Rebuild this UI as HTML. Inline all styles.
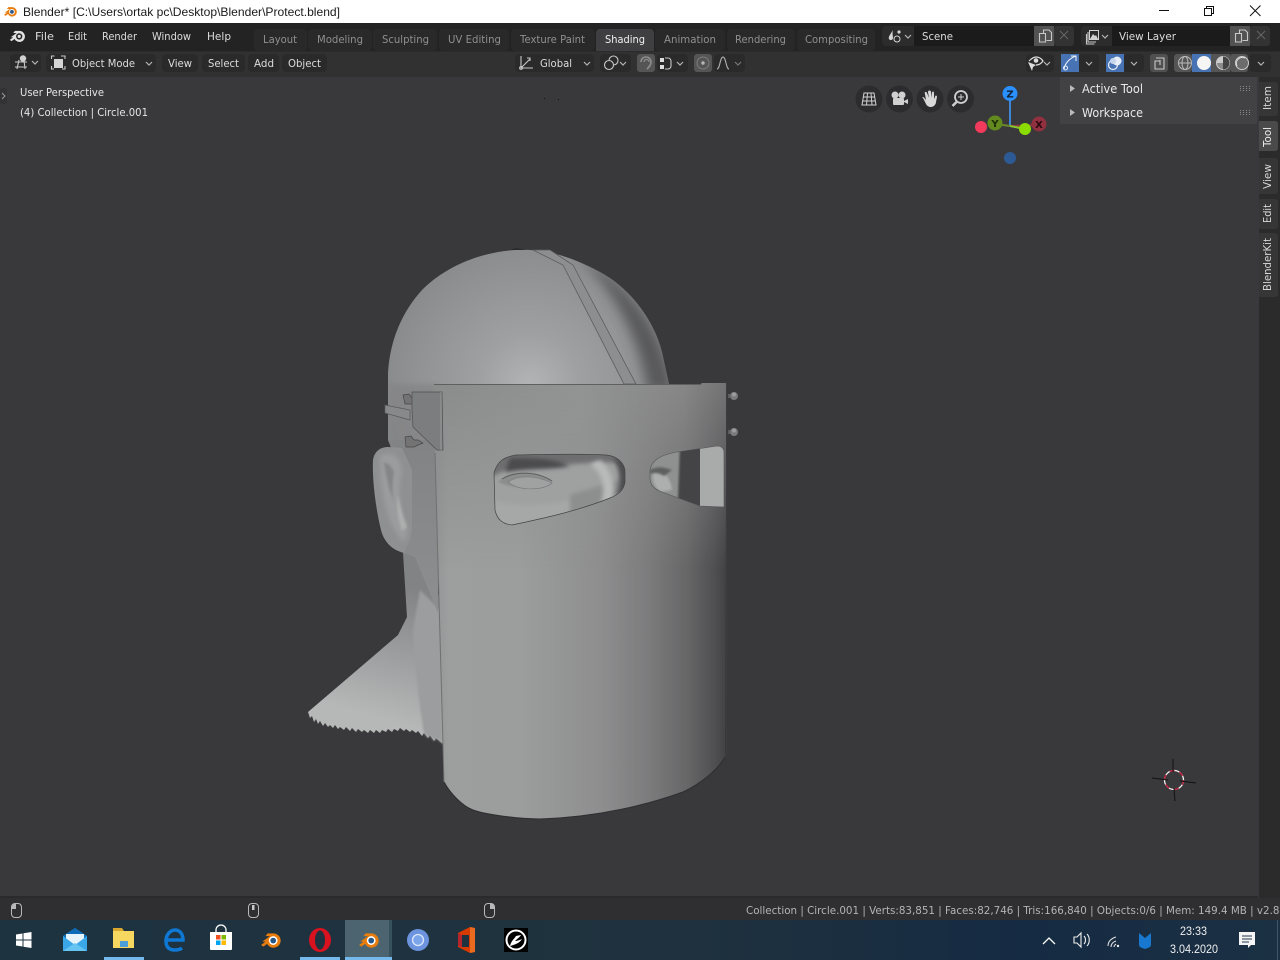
<!DOCTYPE html>
<html><head><meta charset="utf-8"><title>Blender</title>
<style>
html,body{margin:0;padding:0;width:1280px;height:960px;overflow:hidden;background:#39383b}
svg{display:block;position:absolute;left:0;top:0}
text{font-family:"DejaVu Sans","Liberation Sans",sans-serif;font-size:11px;fill:#d6d6d6}
.t{fill:#8f8f8f}
.m{fill:#dcdcdc}
.ic{fill:none;stroke:#c8c8c8;stroke-width:1.1}
.chev{fill:none;stroke:#b5b5b5;stroke-width:1.2}
</style></head><body>
<svg width="1280" height="960" viewBox="0 0 1280 960" xmlns="http://www.w3.org/2000/svg">
<defs>
<filter id="b1" x="-30%" y="-30%" width="160%" height="160%"><feGaussianBlur stdDeviation="1"/></filter>
<filter id="b2" x="-30%" y="-30%" width="160%" height="160%"><feGaussianBlur stdDeviation="2.200"/></filter>
<filter id="b6" x="-50%" y="-50%" width="200%" height="200%"><feGaussianBlur stdDeviation="6"/></filter>
<linearGradient id="shield" x1="0" x2="1" y1="0" y2="0">
<stop offset="0" stop-color="#939495"/><stop offset=".05" stop-color="#9d9e9e"/><stop offset=".29" stop-color="#9c9d9d"/><stop offset=".57" stop-color="#8e8e8f"/><stop offset=".74" stop-color="#7b7b7c"/><stop offset=".87" stop-color="#666667"/><stop offset=".96" stop-color="#504f51"/><stop offset="1" stop-color="#424143"/>
</linearGradient>
<linearGradient id="shieldTop" gradientUnits="userSpaceOnUse" x1="434" x2="727" y1="0" y2="0">
<stop offset="0" stop-color="#8a8b8b"/><stop offset=".5" stop-color="#929393"/><stop offset=".85" stop-color="#878788"/><stop offset="1" stop-color="#737374"/>
</linearGradient>
<linearGradient id="fadeV" gradientUnits="userSpaceOnUse" x1="0" x2="0" y1="384" y2="570">
<stop offset="0" stop-color="#fff"/><stop offset="1" stop-color="#000"/>
</linearGradient>
<mask id="fadeMask" maskUnits="userSpaceOnUse" x="430" y="380" width="300" height="200"><rect x="430" y="380" width="300" height="200" fill="url(#fadeV)"/></mask>
<radialGradient id="head" gradientUnits="userSpaceOnUse" cx="530" cy="385" r="170">
<stop offset="0" stop-color="#b3b4b5"/><stop offset=".3" stop-color="#9fa0a1"/><stop offset=".8" stop-color="#8c8d8e"/><stop offset="1" stop-color="#828384"/>
</radialGradient>
<linearGradient id="neck" gradientUnits="userSpaceOnUse" x1="420" y1="590" x2="385" y2="720">
<stop offset="0" stop-color="#828384"/><stop offset=".5" stop-color="#9c9d9e"/><stop offset="1" stop-color="#b6b7b7"/>
</linearGradient>
<linearGradient id="face" gradientUnits="userSpaceOnUse" x1="0" y1="440" x2="0" y2="620">
<stop offset="0" stop-color="#828384"/><stop offset="1" stop-color="#8e8f90"/>
</linearGradient>
<linearGradient id="task" x1="0" x2="1" y1="0" y2="0">
<stop offset="0" stop-color="#1d3340"/><stop offset=".55" stop-color="#1f313e"/><stop offset=".8" stop-color="#152b43"/><stop offset="1" stop-color="#1b3043"/>
</linearGradient>
<clipPath id="headClip"><path d="M388 415V373C390 340 402 312 422 290C448 264 484 252 515 250C545 248 572 257 600 272C630 288 654 320 662 352L669 384V470H400L388 440Z"/></clipPath>
<clipPath id="eyeClip"><path d="M494 473C497 462 503 457 516 455C560 454 590 454 606 455C618 456 625 464 625 472V482C624 490 618 495 610 498C580 510 550 517 512 525C502 524 497 519 495 510Z"/></clipPath>
<clipPath id="eyeRClip"><path d="M650 470C652 460 660 455 677 452L717 446C722 446 724 449 724 453L724 507L700 506L662 492C654 489 650 485 650 478Z"/></clipPath>
<g id="logo"><path d="M-8 1.500 L-1 -3.500 L-5 -3.500 L-3 -6 L2 -6 A6.500 6.500 0 1 1 -3.500 3.500 L-7 6 L-9 4.500 L-5 1.500Z" fill="#e87d0d"/><circle cx="2" cy="0.500" r="4" fill="#fff"/><circle cx="2" cy="0.500" r="2.600" fill="#265787"/></g>
</defs>

<rect width="1280" height="960" fill="#39383b"/>

<!-- title bar -->
<rect width="1280" height="23" fill="#fff"/>
<use href="#logo" transform="translate(10.500 11.500) scale(.72)"/>
<text x="23" y="16" style="fill:#1a1a1a;font-family:'Liberation Sans',sans-serif;font-size:12px" textLength="317" lengthAdjust="spacingAndGlyphs">Blender* [C:\Users\ortak pc\Desktop\Blender\Protect.blend]</text>
<path d="M1159 10.500h10" stroke="#111" stroke-width="1"/>
<path d="M1204.500 8.500h7v7h-7zM1206.500 8.500v-2h7v7h-2" fill="none" stroke="#111"/>
<path d="M1250 5.500l10.500 10.500M1260.500 5.500l-10.500 10.500" stroke="#111" stroke-width="1"/>

<!-- top bar -->
<rect y="23" width="1280" height="28" fill="#232323"/>
<g transform="translate(17.500 36) scale(.85)"><path d="M-8 1.500L-1 -3.500L-5 -3.500L-3 -6L2 -6A6.500 6.500 0 1 1 -3.500 3.500L-7 6L-9 4.500L-5 1.500Z" fill="#e2e2e2"/><circle cx="2" cy=".5" r="3.700" fill="#232323"/><circle cx="2" cy=".5" r="1.900" fill="#e2e2e2"/></g>
<text x="35" y="40" class="m" textLength="19" lengthAdjust="spacingAndGlyphs">File</text>
<text x="68" y="40" class="m" textLength="19" lengthAdjust="spacingAndGlyphs">Edit</text>
<text x="102" y="40" class="m" textLength="35" lengthAdjust="spacingAndGlyphs">Render</text>
<text x="152" y="40" class="m" textLength="39" lengthAdjust="spacingAndGlyphs">Window</text>
<text x="207" y="40" class="m" textLength="24" lengthAdjust="spacingAndGlyphs">Help</text>

<!-- workspace tabs -->
<g fill="#292929">
<rect x="254" y="29" width="53" height="22" rx="4"/><rect x="308" y="29" width="64" height="22" rx="4"/><rect x="373" y="29" width="64" height="22" rx="4"/><rect x="439" y="29" width="70" height="22" rx="4"/><rect x="511" y="29" width="84" height="22" rx="4"/><rect x="655" y="29" width="70" height="22" rx="4"/><rect x="727" y="29" width="68" height="22" rx="4"/><rect x="797" y="29" width="78" height="22" rx="4"/>
</g>
<path d="M596 51V33a4 4 0 0 1 4-4h50a4 4 0 0 1 4 4v18z" fill="#3f3f41"/>
<text x="263" y="43" class="t" textLength="34" lengthAdjust="spacingAndGlyphs">Layout</text>
<text x="317" y="43" class="t" textLength="46" lengthAdjust="spacingAndGlyphs">Modeling</text>
<text x="382" y="43" class="t" textLength="47" lengthAdjust="spacingAndGlyphs">Sculpting</text>
<text x="448" y="43" class="t" textLength="53" lengthAdjust="spacingAndGlyphs">UV Editing</text>
<text x="520" y="43" class="t" textLength="65" lengthAdjust="spacingAndGlyphs">Texture Paint</text>
<text x="605" y="43" style="fill:#f0f0f0" textLength="40" lengthAdjust="spacingAndGlyphs">Shading</text>
<text x="664" y="43" class="t" textLength="52" lengthAdjust="spacingAndGlyphs">Animation</text>
<text x="735" y="43" class="t" textLength="51" lengthAdjust="spacingAndGlyphs">Rendering</text>
<text x="805" y="43" class="t" textLength="63" lengthAdjust="spacingAndGlyphs">Compositing</text>

<!-- scene selector -->
<rect x="882" y="26" width="34" height="20" rx="4" fill="#2c2c2c"/>
<rect x="914" y="26" width="121" height="20" fill="#1b1b1b"/>
<rect x="1034" y="26" width="20" height="20" fill="#525252"/>
<rect x="1054" y="26" width="20" height="20" rx="3" fill="#333"/>
<text x="922" y="40" class="m" textLength="31" lengthAdjust="spacingAndGlyphs">Scene</text>
<path d="M893 30c-3 5-5 7-4 9s4 1 4-1-1-5 0-8z" fill="#d4d4d4"/><circle cx="899" cy="32" r="1.600" fill="#d4d4d4"/><circle cx="897" cy="39" r="3" fill="none" stroke="#d4d4d4"/>
<path class="chev" d="M905 35l3 3 3-3"/>
<path class="ic" d="M1039.500 33.500h4v-3.500h5.500l2.500 2.500v8h-5M1039.500 33.500h6v8.500h-6z"/>
<path d="M1060 31l8 8m0-8l-8 8" stroke="#666" stroke-width="1"/>

<rect x="1081" y="26" width="34" height="20" rx="4" fill="#2c2c2c"/>
<rect x="1112" y="26" width="118" height="20" fill="#1b1b1b"/>
<rect x="1230" y="26" width="20" height="20" fill="#525252"/>
<rect x="1250" y="26" width="20" height="20" rx="3" fill="#333"/>
<text x="1119" y="40" class="m" textLength="57" lengthAdjust="spacingAndGlyphs">View Layer</text>
<path class="ic" d="M1088 32v10h8M1086.500 34v10h8"/><rect x="1089.500" y="30.500" width="9" height="9" fill="none" stroke="#d0d0d0"/><path d="M1090 39l3-5 2 2 1-1 2 4z" fill="#d0d0d0"/>
<path class="chev" d="M1102 35l3 3 3-3"/>
<path class="ic" d="M1235.500 33.500h4v-3.500h5.500l2.500 2.500v8h-5M1235.500 33.500h6v8.500h-6z"/>
<path d="M1257 31l8 8m0-8l-8 8" stroke="#666" stroke-width="1"/>

<!-- 3D viewport header -->
<rect y="51" width="1280" height="26" fill="#313132"/>
<rect y="51" width="1280" height="1" fill="#2b2b2b"/>
<g fill="#2a2a2b">
<rect x="10" y="54" width="31" height="18" rx="4"/>
<rect x="46" y="54" width="110" height="18" rx="4"/>
<rect x="162" y="54" width="36" height="18" rx="4"/>
<rect x="202" y="54" width="43" height="18" rx="4"/>
<rect x="248" y="54" width="31" height="18" rx="4"/>
<rect x="282" y="54" width="45" height="18" rx="4"/>
<rect x="515" y="54" width="79" height="18" rx="4"/>
<rect x="600" y="54" width="31" height="18" rx="4"/>
<rect x="657" y="54" width="31" height="18" rx="4"/>
<rect x="714" y="54" width="31" height="18" rx="4"/>
<rect x="1026" y="54" width="28" height="18" rx="4"/>
<rect x="1079" y="54" width="20" height="18" rx="3"/>
<rect x="1124" y="54" width="20" height="18" rx="3"/>
<rect x="1250" y="54" width="21" height="18" rx="3"/>
</g>
<path class="ic" d="M15 62h12M15 67h12M19 60l-2 9M24 60l1 9"/><circle cx="23" cy="58.500" r="3.200" fill="#d0d0d0"/>
<path class="chev" d="M32 61l3 3 3-3"/>
<rect x="54" y="59" width="9" height="9" fill="#d5d5d5"/><path class="ic" d="M51.500 59v-3h3M61 56h4v3M65 66v3h-3M54 69h-2.500v-3"/>
<text x="72" y="67" class="m" textLength="63" lengthAdjust="spacingAndGlyphs">Object Mode</text>
<path class="chev" d="M146 62l3 3 3-3"/>
<text x="168" y="67" class="m" textLength="24" lengthAdjust="spacingAndGlyphs">View</text>
<text x="208" y="67" class="m" textLength="31" lengthAdjust="spacingAndGlyphs">Select</text>
<text x="254" y="67" class="m" textLength="20" lengthAdjust="spacingAndGlyphs">Add</text>
<text x="288" y="67" class="m" textLength="33" lengthAdjust="spacingAndGlyphs">Object</text>

<path class="ic" d="M521 56v12h12M521 68l9-9M527 58h3v3"/><circle cx="521" cy="68" r="1.400" fill="none" stroke="#c8c8c8"/>
<text x="540" y="67" class="m" textLength="32" lengthAdjust="spacingAndGlyphs">Global</text>
<path class="chev" d="M584 62l3 3 3-3"/>
<circle cx="609" cy="65" r="4.500" fill="none" stroke="#c8c8c8" stroke-width="1.100"/><path d="M609 60.500a4.500 4.500 0 1 1 4.500 4.500" fill="none" stroke="#c8c8c8" stroke-width="1.100"/>
<path class="chev" d="M620 62l3 3 3-3"/>
<rect x="637" y="54" width="18" height="18" rx="3" fill="#555"/>
<path d="M641 62a5 5 0 0 1 10 0c0 3-2 5-4 7" fill="none" stroke="#8e8e8e" stroke-width="1.600"/>
<path d="M644 62a2.500 2.500 0 0 1 5 0" fill="none" stroke="#8e8e8e" stroke-width="1.200"/>
<rect x="660" y="58" width="4" height="4" fill="#ddd"/><rect x="660" y="65" width="4" height="4" fill="#ddd"/>
<path class="ic" d="M665 58h3a3 3 0 0 1 3 3v5a3 3 0 0 1-3 3h-3"/>
<path class="chev" d="M677 62l3 3 3-3"/>
<rect x="694" y="54" width="18" height="18" rx="3" fill="#555"/>
<circle cx="703" cy="63" r="6" fill="none" stroke="#7c7c7c"/><circle cx="703" cy="63" r="1.700" fill="#b5b5b5"/>
<path d="M717 69c3 0 3-12 6-12s3 12 6 12" fill="none" stroke="#b0b0b0" stroke-width="1.100"/>
<path d="M735 62l3 3 3-3" fill="none" stroke="#777" stroke-width="1.200"/>

<path d="M1029 61c3-3 5-4 7-4s5 1 7 4c-2 3-5 4-7 4" fill="none" stroke="#ddd" stroke-width="1.200"/>
<circle cx="1036" cy="60.500" r="2.300" fill="#ddd"/><path d="M1028 62l8 3-3 2-1 4z" fill="#ddd"/>
<path class="chev" d="M1044 62l3 3 3-3"/>
<rect x="1061" y="54" width="18" height="18" fill="#4772b3"/>
<path d="M1064 69c1-6 6-11 12-13M1071 56h5v5" fill="none" stroke="#e8eef8" stroke-width="1.100"/><circle cx="1065.500" cy="68" r="2" fill="none" stroke="#e8eef8"/>
<path class="chev" d="M1086 62l3 3 3-3"/>
<rect x="1106" y="54" width="18" height="18" fill="#4772b3"/>
<circle cx="1113" cy="65" r="4.500" fill="none" stroke="#e8eef8" stroke-width="1.200"/><circle cx="1117" cy="61" r="4.500" fill="#e8eef8"/><circle cx="1113" cy="61" r="3" fill="#c8d6ec"/>
<path class="chev" d="M1131 62l3 3 3-3"/>
<rect x="1150" y="54" width="18" height="18" rx="3" fill="#505050"/>
<path class="ic" d="M1156 58h8v11h-9v-8h5v-1M1155 61h5v4"/>
<rect x="1174" y="54" width="18" height="18" rx="3" fill="#555"/>
<rect x="1192" y="54" width="19" height="18" fill="#4772b3"/>
<rect x="1211" y="54" width="19" height="18" fill="#555"/>
<rect x="1230" y="54" width="18" height="18" rx="3" fill="#555"/>
<circle cx="1185" cy="63" r="6.500" fill="none" stroke="#bbb"/><ellipse cx="1185" cy="63" rx="3" ry="6.500" fill="none" stroke="#bbb"/><path d="M1178.500 63h13" stroke="#bbb"/>
<circle cx="1204" cy="63" r="7" fill="#f5f5f5"/>
<circle cx="1223" cy="63" r="6.500" fill="#8a8a8a" stroke="#ccc"/><path d="M1223 56.500a6.500 6.500 0 0 1 0 13z" fill="#444"/><path d="M1223 56.500a6.500 6.500 0 0 0-6.500 6.500h6.500z" fill="#ccc"/>
<circle cx="1242" cy="63" r="6.500" fill="#6c6c6c" stroke="#ccc"/><path d="M1237 66a6 6 0 0 1 8-8" fill="none" stroke="#ddd"/>
<path class="chev" d="M1258 62l3 3 3-3"/>

<!-- overlay text -->
<text x="20" y="96" style="fill:#e6e6e6" textLength="84" lengthAdjust="spacingAndGlyphs">User Perspective</text>
<text x="20" y="116" style="fill:#e6e6e6" textLength="128" lengthAdjust="spacingAndGlyphs">(4) Collection | Circle.001</text>
<rect x="0" y="88" width="7" height="16" rx="2" fill="#2d2d2f" opacity=".5"/>
<path d="M2 93l3 3-3 3" fill="none" stroke="#9a9a9a"/>
<rect x="544" y="98" width="1" height="1" fill="#111"/><rect x="558" y="99" width="1" height="1" fill="#111"/>

<!-- nav gizmo buttons -->
<g fill="#2c2b2e"><circle cx="869" cy="99" r="13.500"/><circle cx="899.500" cy="99" r="13.500"/><circle cx="930" cy="99" r="13.500"/><circle cx="960.500" cy="99" r="13.500"/></g>
<path d="M864 93h10l2 12h-14zM862.500 101h13M863.500 97h11M867.500 93l-1 12M871 93l1 12" fill="none" stroke="#d0d0d0" stroke-width="1"/>
<circle cx="895" cy="95" r="3.500" fill="#d0d0d0"/><circle cx="902" cy="95" r="3.500" fill="#d0d0d0"/><rect x="893" y="98" width="11" height="7" rx="1" fill="#d0d0d0"/><path d="M904 101l4-2v5l-4-2z" fill="#d0d0d0"/>
<path d="M923 98l3 6c1 2 3 3 5 3s5-2 5-5l1-5c0-2-2-2-2 0l-1 2v-6c0-2-2-2-2 0v5l-1-6c0-2-3-2-3 0l1 6-2-5c-1-2-3-1-2 1l1 6c-1-1-2-3-3-3s-1 0 0 1z" fill="#d8d8d8"/>
<circle cx="961" cy="97" r="6" fill="none" stroke="#d0d0d0" stroke-width="1.800"/><path d="M956.500 102l-4 4" stroke="#d0d0d0" stroke-width="2.500"/><path d="M961 94v6M958 97h6" stroke="#d0d0d0"/>

<!-- axis gizmo -->
<path d="M1010 94V126" stroke="#3f86d4" stroke-width="2"/>
<path d="M1010 126L995 124" stroke="#6a8c2a" stroke-width="2"/>
<path d="M1010 126L1039 125" stroke="#8c3a45" stroke-width="2"/>
<path d="M1010 126L1025 129" stroke="#88c82a" stroke-width="2"/>
<circle cx="1010" cy="158" r="6" fill="#2d5a94"/>
<circle cx="981" cy="127" r="6" fill="#f23a5c"/>
<circle cx="995" cy="123" r="7.500" fill="#628a1e"/>
<circle cx="1039" cy="124" r="7.500" fill="#91303f"/>
<circle cx="1025" cy="129" r="6" fill="#8bdc00"/>
<circle cx="1010" cy="93.500" r="7.500" fill="#2a8fff"/>
<text x="1010" y="97.500" text-anchor="middle" style="fill:#123;font-size:10px;font-weight:bold">Z</text>
<text x="995" y="127" text-anchor="middle" style="fill:#1e2c08;font-size:10px;font-weight:bold">Y</text>
<text x="1039" y="128" text-anchor="middle" style="fill:#2a0a10;font-size:10px;font-weight:bold">X</text>

<!-- N panel -->
<rect x="1060" y="77" width="197" height="47" fill="#424244"/>
<path d="M1070 85l5 3.500-5 3.500zM1070 109l5 3.500-5 3.500z" fill="#b9b9b9"/>
<text x="1082" y="93" style="fill:#e8e8e8;font-size:12px" textLength="61" lengthAdjust="spacingAndGlyphs">Active Tool</text>
<text x="1082" y="117" style="fill:#e8e8e8;font-size:12px" textLength="61" lengthAdjust="spacingAndGlyphs">Workspace</text>
<g stroke="#8a8a8a" stroke-dasharray="1 2" stroke-width="1"><path d="M1240 86.500h11M1240 88.500h11M1240 90.500h11M1240 110.500h11M1240 112.500h11M1240 114.500h11"/></g>

<!-- side tabs -->
<rect x="1259" y="77" width="21" height="821" fill="#2b2b2c"/>
<g fill="#363637">
<path d="M1259 82h16a3 3 0 0 1 3 3v28a3 3 0 0 1-3 3h-16z"/>
<path d="M1259 158h16a3 3 0 0 1 3 3v30a3 3 0 0 1-3 3h-16z"/>
<path d="M1259 199h16a3 3 0 0 1 3 3v24a3 3 0 0 1-3 3h-16z"/>
<path d="M1259 233h16a3 3 0 0 1 3 3v58a3 3 0 0 1-3 3h-16z"/>
</g>
<path d="M1259 121h16a3 3 0 0 1 3 3v24a3 3 0 0 1-3 3h-16z" fill="#4a4a4b"/>
<g>
<text transform="translate(1271 110) rotate(-90)" textLength="24" lengthAdjust="spacingAndGlyphs">Item</text>
<text transform="translate(1271 147) rotate(-90)" style="fill:#f0f0f0" textLength="20" lengthAdjust="spacingAndGlyphs">Tool</text>
<text transform="translate(1271 189) rotate(-90)" textLength="25" lengthAdjust="spacingAndGlyphs">View</text>
<text transform="translate(1271 223) rotate(-90)" textLength="19" lengthAdjust="spacingAndGlyphs">Edit</text>
<text transform="translate(1271 291) rotate(-90)" textLength="53" lengthAdjust="spacingAndGlyphs">BlenderKit</text>
</g>

<!-- neck -->
<path d="M403 553L407 617L398 635L308 712L310 718L312 716L314 722L316 719L318 724L320 721L323 726L325 723L328 727L330 725L333 728L335 725L338 729L340 727L344 730L346 727L350 731L352 728L356 732L358 729L362 732L364 730L368 733L370 730L374 733L376 730L380 733L382 730L386 732L388 729L392 732L394 729L398 731L400 728L404 731L406 729L410 732L412 730L416 733L418 731L422 736L424 733L428 738L430 735L434 741L436 738L443 744L440 600L420 540Z" fill="url(#neck)"/>
<path d="M413 630C415 670 420 710 424 733L428 738L430 735L434 741L436 738L443 744L440 610L420 590Z" fill="#9c9d9e" filter="url(#b1)"/>

<!-- head -->
<g clip-path="url(#headClip)">
<rect x="380" y="240" width="300" height="240" fill="url(#head)"/>
<path d="M578 255C640 290 665 340 674 392L648 392C640 340 615 290 578 255Z" fill="#4c4b4d" opacity=".8" filter="url(#b6)"/>
<path d="M388 384h50v90h-50z" fill="#838485" opacity=".7" filter="url(#b2)"/>
</g>
<!-- strap -->
<path d="M533 250L550 250L573 265L636 384H624L563 265Z" fill="#8d8e8f" stroke="#5c5c5d" stroke-width=".8"/>
<path d="M510 250l6-2 10 2z" fill="#2b2b2d"/>

<!-- side of face -->
<path d="M390 440H438V613L415 557L404 553L396 500Z" fill="url(#face)"/>
<!-- ear -->
<path d="M373 460C374 452 380 447 388 447L402 448L412 470L412 530L410 540L404 553C392 550 384 542 381 530C376 510 372 480 373 460Z" fill="#8f9091"/>
<path d="M380 456C390 450 400 456 402 470C398 490 398 510 408 530L404 542C390 530 382 500 380 470Z" fill="#9b9c9d" filter="url(#b2)"/>
<path d="M398 495c2 10 5 22 9 32l-5 4c-4-12-6-24-4-36z" fill="#adaeae" filter="url(#b1)"/>
<path d="M384 462c5 2 8 5 10 10-2 12-2 22 0 30-5-12-8-26-10-40z" fill="#858687" filter="url(#b1)"/>

<!-- band + pegs -->
<path d="M385 405L410 410L410 420L385 413Z" fill="#88898a" stroke="#58585a" stroke-width=".7"/>
<path d="M403 395L409 394L412 398L416 397L422 400L416 402L412 404L405 404Z" fill="#737374" stroke="#47474a" stroke-width=".7"/>
<path d="M405 437L411 436L414 440L418 440L423 443L418 445L414 447L406 447Z" fill="#737374" stroke="#47474a" stroke-width=".7"/>

<!-- shield -->
<path id="sh" d="M434 384L701 384L702 383L726 383L725 757C718 770 700 784 683 792C650 804 600 817 540 819C520 819 487 815 473 810C462 806 450 793 444 782C441 680 438 560 435 453Z" fill="url(#shield)"/>
<path d="M434 384L701 384L702 383L726 383L726 580H436Z" fill="url(#shieldTop)" mask="url(#fadeMask)"/>
<path d="M434 384.500L701 384.500" stroke="#5f5f60" stroke-width="1"/>
<path d="M435 453C438 560 441 680 444 782" stroke="#707071" stroke-width="1" fill="none"/>
<path d="M444 782C450 793 462 806 473 810C487 815 520 819 540 819C600 817 650 804 683 792C700 784 718 770 725 757" stroke="#2f2e31" stroke-width="1.100" fill="none"/>
<path d="M726.500 384V757" stroke="#3d3c3f" stroke-width="1"/>

<!-- bracket -->
<path d="M412 392L442 392L443 450L437 450L413 427L412 410Z" fill="#7c7d7e" stroke="#4f4f50" stroke-width=".7"/>
<path d="M441 392V450" stroke="#98999a" stroke-width="1"/>

<!-- left eye hole -->
<g clip-path="url(#eyeClip)">
<rect x="490" y="450" width="140" height="80" fill="#9fa0a0"/>
<path d="M490 500C530 510 570 505 630 480V530H490Z" fill="#a6a7a7" filter="url(#b2)"/>
<path d="M570 495L626 478V505L570 520Z" fill="#8d8e8e" filter="url(#b2)"/>
<path d="M490 450H630V462C600 462 570 464 545 466C525 466 505 468 490 478Z" fill="#6e6e6f" filter="url(#b2)"/>
<path d="M510 458C530 458 555 458 570 466C550 470 525 468 505 472Z" fill="#4c4c4d" filter="url(#b2)"/>
<path d="M498 482C510 470 535 470 552 482C540 488 515 490 498 482Z" fill="#8b8c8c" filter="url(#b1)"/>
<path d="M508 482C518 475 536 475 552 483C545 490 520 492 508 482Z" fill="#a0a1a1" stroke="#77777a" stroke-width=".6"/>
<path d="M502 479C515 471 536 471 552 481" fill="none" stroke="#5d5d5e" stroke-width="1"/>
<path d="M590 464C604 474 606 490 600 506L612 500C616 488 612 470 600 460Z" fill="#b9baba" filter="url(#b2)"/>
<path d="M612 458C620 466 622 484 616 496L630 490V460Z" fill="#4e4e4f" filter="url(#b2)"/>
</g>
<path d="M494 473C497 462 503 457 516 455C560 454 590 454 606 455C618 456 625 464 625 472V482C624 490 618 495 610 498C580 510 550 517 512 525C502 524 497 519 495 510Z" fill="none" stroke="#444446" stroke-width=".7"/>

<!-- right eye hole -->
<g clip-path="url(#eyeRClip)">
<rect x="645" y="440" width="85" height="75" fill="#444345"/>
<path d="M645 445H680L678 500H645Z" fill="#8f9090" filter="url(#b1)"/>
<path d="M655 468C663 470 671 478 672 490L660 492C654 486 650 478 655 468Z" fill="#adaeae" filter="url(#b1)"/>
<path d="M650 470C656 466 664 467 672 470L664 476C660 473 654 472 650 474Z" fill="#5e5e5f" filter="url(#b1)"/>
<path d="M700 444H726V510H700Z" fill="#a9aaaa"/>
</g>
<path d="M650 470C652 460 660 455 677 452L717 446C722 446 724 449 724 453L724 507L700 506L662 492C654 489 650 485 650 478Z" fill="none" stroke="#555557" stroke-width=".6"/>

<!-- rivets -->
<circle cx="734" cy="396" r="4" fill="#7b7b7c"/><path d="M730 394h-2v4h2z" fill="#5d5d5e"/><circle cx="734" cy="394.500" r="2" fill="#9c9c9d"/>
<circle cx="734" cy="432" r="4" fill="#7b7b7c"/><path d="M730 430h-2v4h2z" fill="#5d5d5e"/><circle cx="734" cy="430.500" r="2" fill="#9c9c9d"/>

<!-- 3D cursor -->
<circle cx="1174" cy="780" r="9.500" fill="none" stroke="#f0f0f0" stroke-width="1.300"/>
<circle cx="1174" cy="780" r="9.500" fill="none" stroke="#c0213f" stroke-width="1.400" stroke-dasharray="5 5"/>
<path d="M1152 778L1168 780M1180 781L1196 783M1173 759V772M1174 788L1175 801" stroke="#111" stroke-width="1"/>

<!-- status bar -->
<rect y="896" width="1258" height="2" fill="#2a2a2b"/>
<rect y="898" width="1280" height="22" fill="#2f2e30"/>
<g fill="none" stroke="#b8b8b8" stroke-width="1">
<rect x="11.500" y="903.500" width="10" height="14" rx="3.500"/>
<rect x="248.500" y="903.500" width="10" height="14" rx="3.500"/>
<rect x="484.500" y="903.500" width="10" height="14" rx="3.500"/>
</g>
<path d="M12 907v-1a3 3 0 0 1 4-2v5h-4z" fill="#b8b8b8"/>
<rect x="252" y="905" width="2.500" height="5" fill="#c8c8c8"/>
<path d="M490 904a3 3 0 0 1 4 2v3h-4z" fill="#b8b8b8"/>
<text x="746" y="914" style="fill:#b4b4b4" textLength="540" lengthAdjust="spacingAndGlyphs">Collection | Circle.001 | Verts:83,851 | Faces:82,746 | Tris:166,840 | Objects:0/6 | Mem: 149.4 MB | v2.80</text>

<!-- taskbar -->
<rect y="920" width="1280" height="40" fill="url(#task)"/>
<path d="M16 934.500l6.500-1v6h-6.500zM23.500 933.300l8-1.300v7.500h-8zM16 940.500h6.500v6l-6.500-1zM23.500 940.500h8v7.500l-8-1.300z" fill="#fff"/>
<!-- mail -->
<path d="M63 936l12-8 12 8v15H63z" fill="#1f8fdc"/><path d="M63 936l12 9 12-9-12-8z" fill="#0f6cb8"/><path d="M66 934h18v8l-9 5-9-5z" fill="#e8f4fb"/><path d="M63 936l12 9 12-9v15H63z" fill="#3aa8e8"/><path d="M63 951l12-8 12 8z" fill="#66c4f2"/>
<!-- explorer -->
<rect x="113" y="931" width="21" height="17" fill="#f6d860"/><path d="M113 931v-3h9l2 3z" fill="#d9a62e"/><rect x="120" y="941" width="8" height="6" fill="#4c9ed9"/><rect x="104" y="957" width="40" height="3" fill="#76b9ed"/>
<!-- edge -->
<path d="M166 940h17c0-7-4-10-8-10s-9 4-9 11 4 9 9 9c3 0 5-.5 7-2" fill="none" stroke="#0f78d4" stroke-width="3.500"/>
<!-- store -->
<path d="M210 932h22v17a1 1 0 0 1-1 1h-20a1 1 0 0 1-1-1z" fill="#fff"/><path d="M216 932v-2a5 5 0 0 1 10 0v2" fill="none" stroke="#fff" stroke-width="1.300"/>
<rect x="216" y="935" width="4.500" height="4.500" fill="#f25022"/><rect x="221.500" y="935" width="4.500" height="4.500" fill="#7fba00"/><rect x="216" y="940.500" width="4.500" height="4.500" fill="#00a4ef"/><rect x="221.500" y="940.500" width="4.500" height="4.500" fill="#ffb900"/>
<!-- blender -->
<use href="#logo" transform="translate(271 940) scale(1.100)"/>
<!-- opera -->
<ellipse cx="320" cy="940" rx="11" ry="12" fill="#d9121f"/><ellipse cx="320" cy="940" rx="5" ry="9.500" fill="#1e323f"/><rect x="300" y="957" width="40" height="3" fill="#76b9ed"/>
<!-- active blender -->
<rect x="345" y="920" width="47" height="40" fill="#4b6470"/><rect x="389" y="920" width="3" height="40" fill="#36505c"/>
<use href="#logo" transform="translate(369 940) scale(1.100)"/><rect x="345" y="957" width="47" height="3" fill="#76b9ed"/>
<!-- chromium -->
<circle cx="418" cy="940" r="11" fill="#6c94de"/><circle cx="418" cy="940" r="5.500" fill="#7ba5e8" stroke="#dbe6f8" stroke-width="1.300"/>
<!-- office -->
<path d="M458 933l12-6 5 1v24l-5 1-12-6z" fill="#d83b01"/><path d="M470 927l5 1v24l-5 1z" fill="#ea6a1f"/><path d="M462 935h7v12h-7z" fill="#1f323f"/><path d="M458 933l4 2v12l-4-1z" fill="#b7252c"/>
<!-- black app -->
<rect x="504" y="928" width="24" height="24" fill="#000"/><circle cx="516" cy="940" r="9.500" fill="none" stroke="#fff" stroke-width="2"/><path d="M510 946c1-5 5-8 6-10l5-1c-1 2-4 4-6 6 2 0 5-1 7-2-2 4-8 6-12 7z" fill="#fff"/>

<!-- tray -->
<path d="M1043 944l6-6 6 6" fill="none" stroke="#fff" stroke-width="1.300"/>
<path d="M1074 937h3l4-4v14l-4-4h-3zM1084 936c2 2 2 6 0 8M1087 934c3 3 3 9 0 12" fill="none" stroke="#eee" stroke-width="1.100"/>
<path d="M1108 946c0-5 4-8 8-9M1111 947c0-3 2-5 5-6M1114 947c0-2 1-2 2-3" fill="none" stroke="#ddd" stroke-width="1.100"/><circle cx="1118" cy="946" r="1.200" fill="#eee"/>
<path d="M1139 933l6 5 6-5v12c0 2-3 3-6 4-3-1-6-2-6-4z" fill="#1878cf"/>
<text x="1193.500" y="935" text-anchor="middle" style="fill:#f0f0f0;font-family:'Liberation Sans',sans-serif;font-size:12px" textLength="27" lengthAdjust="spacingAndGlyphs">23:33</text>
<text x="1194" y="953" text-anchor="middle" style="fill:#f0f0f0;font-family:'Liberation Sans',sans-serif;font-size:12px" textLength="48" lengthAdjust="spacingAndGlyphs">3.04.2020</text>
<path d="M1239 932h16v13h-4l-3 3v-3h-9z" fill="#f5f5f5"/><path d="M1242 936h10M1242 939h10M1242 942h7" stroke="#22384a" stroke-width="1"/>
<rect x="1277" y="920" width="1" height="40" fill="#3c5568"/>
</svg>
</body></html>
